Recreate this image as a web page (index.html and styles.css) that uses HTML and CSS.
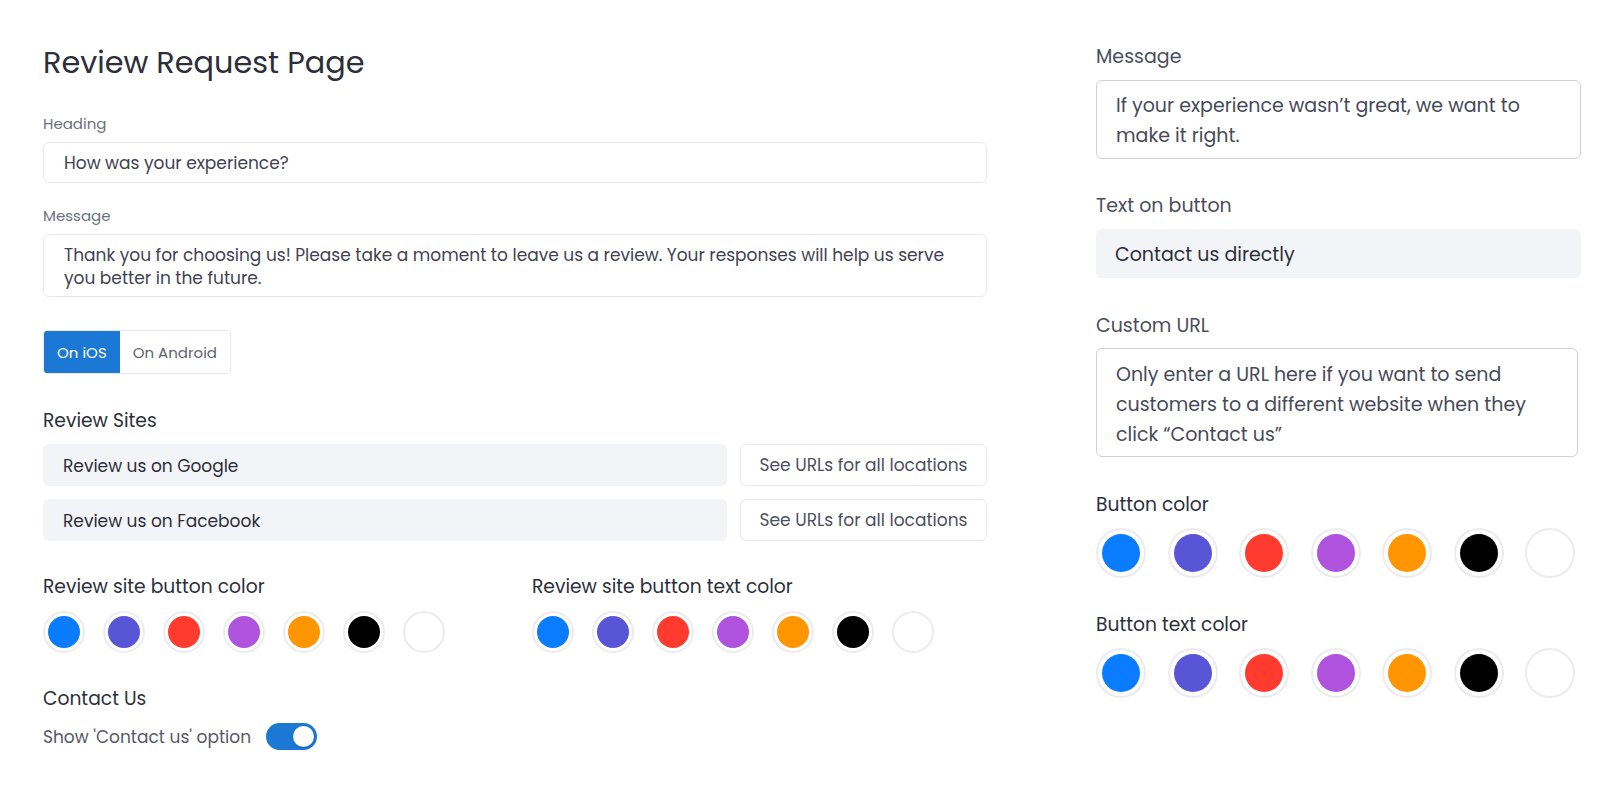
FILE: index.html
```html
<!DOCTYPE html>
<html lang="en">
<head>
    <meta charset="UTF-8">
    <meta name="viewport" content="width=device-width, initial-scale=1.0">
    <title>Review Request Page</title>
    <link rel="stylesheet" href="styles.css">
</head>
<body>
    <div class="page">
        <!-- Main settings -->
        <section class="col-main">
            <h1 class="title">Review Request Page</h1>

            <div class="field">
                <label class="label-sm" for="heading">Heading</label>
                <input class="input" type="text" id="heading" value="How was your experience?">
            </div>

            <div class="field field-msg">
                <label class="label-sm" for="message">Message</label>
                <textarea class="input textarea-main" id="message">Thank you for choosing us! Please take a moment to leave us a review. Your responses will help us serve
you better in the future.</textarea>
            </div>

            <!-- Platform switch -->
            <div class="segmented">
                <button class="seg-btn active" type="button">On iOS</button>
                <button class="seg-btn" type="button">On Android</button>
            </div>

            <h2 class="section-label sites-label">Review Sites</h2>
            <div class="site-row">
                <input class="site-input" type="text" value="Review us on Google">
                <button class="urls-btn" type="button">See URLs for all locations</button>
            </div>
            <div class="site-row site-row-2">
                <input class="site-input" type="text" value="Review us on Facebook">
                <button class="urls-btn" type="button">See URLs for all locations</button>
            </div>

            <div class="color-groups">
                <div>
                    <h3 class="section-label">Review site button color</h3>
                    <div class="swatches">
                        <button class="swatch blue"></button>
                        <button class="swatch indigo"></button>
                        <button class="swatch red"></button>
                        <button class="swatch purple"></button>
                        <button class="swatch orange"></button>
                        <button class="swatch black"></button>
                        <button class="swatch white"></button>
                    </div>
                </div>
                <div>
                    <h3 class="section-label">Review site button text color</h3>
                    <div class="swatches">
                        <button class="swatch blue"></button>
                        <button class="swatch indigo"></button>
                        <button class="swatch red"></button>
                        <button class="swatch purple"></button>
                        <button class="swatch orange"></button>
                        <button class="swatch black"></button>
                        <button class="swatch white"></button>
                    </div>
                </div>
            </div>

            <h3 class="section-label contact-label">Contact Us</h3>
            <div class="toggle-row">
                <span>Show 'Contact us' option</span>
                <span class="switch"><span class="knob"></span></span>
            </div>
        </section>

        <!-- Contact us settings -->
        <section class="col-side">
            <label class="label-lg first" for="contact-msg">Message</label>
            <textarea class="side-input side-msg" id="contact-msg">If your experience wasn’t great, we want to
make it right.</textarea>

            <label class="label-lg" for="btn-text">Text on button</label>
            <input class="side-input side-text" type="text" id="btn-text" value="Contact us directly">

            <label class="label-lg label-url" for="custom-url">Custom URL</label>
            <textarea class="side-input side-url" id="custom-url">Only enter a URL here if you want to send
customers to a different website when they
click “Contact us”</textarea>

            <h3 class="section-label side-color">Button color</h3>
            <div class="swatches swatches-lg">
                <button class="swatch blue"></button>
                <button class="swatch indigo"></button>
                <button class="swatch red"></button>
                <button class="swatch purple"></button>
                <button class="swatch orange"></button>
                <button class="swatch black"></button>
                <button class="swatch white"></button>
            </div>

            <h3 class="section-label side-color side-color-2">Button text color</h3>
            <div class="swatches swatches-lg swatches-last">
                <button class="swatch blue"></button>
                <button class="swatch indigo"></button>
                <button class="swatch red"></button>
                <button class="swatch purple"></button>
                <button class="swatch orange"></button>
                <button class="swatch black"></button>
                <button class="swatch white"></button>
            </div>
        </section>
    </div>
</body>
</html>
```

FILE: styles.css
```css
body {
    font-family: 'Poppins', 'Open Sans', sans-serif;
    margin: 0;
    padding: 0;
    background-color: #fff;
    color: #2c2f39;
}

.page {
    display: grid;
    grid-template-columns: 944px 485px;
    column-gap: 109px;
    padding: 0 43px;
}

/* ---------- left column ---------- */

.title {
    margin: 45px 0 0;
    font-size: 30.3px;
    line-height: 36px;
    font-weight: 400;
    color: #2c2f39;
}

.field {
    display: flex;
    flex-direction: column;
    margin-top: 33px;
}

.field-msg {
    margin-top: 23px;
}

.label-sm {
    font-size: 15px;
    line-height: 20px;
    color: #6d707c;
}

.input {
    margin-top: 8px;
    height: 41px;
    padding: 1px 20px 0;
    border: 1px solid #e7e8ec;
    border-radius: 6px;
    font-family: inherit;
    font-size: 17px;
    color: #3f4251;
    background: #fff;
    box-sizing: border-box;
    outline: none;
}

.textarea-main {
    height: 63px;
    padding: 9px 20px 0;
    line-height: 23px;
    resize: none;
}

.segmented {
    display: inline-flex;
    margin-top: 33px;
    border: 1px solid #e7e8ec;
    border-radius: 4px;
    overflow: hidden;
}

.seg-btn {
    height: 42px;
    padding: 0 13px;
    border: none;
    background: #fff;
    font-family: inherit;
    font-size: 15px;
    color: #5f6270;
    cursor: pointer;
}

.seg-btn.active {
    background: #1b78d4;
    color: #fff;
}

.section-label {
    margin: 0;
    font-size: 18.7px;
    line-height: 26px;
    font-weight: 400;
    color: #2c2f39;
}

.sites-label {
    margin-top: 35px;
    line-height: 24px;
}

.site-row {
    display: grid;
    grid-template-columns: 1fr 247px;
    gap: 13px;
    margin-top: 11px;
}

.site-row-2 {
    margin-top: 13px;
}

.site-input {
    height: 42px;
    padding: 1px 20px 0;
    border: none;
    border-radius: 6px;
    background: #f3f4f8;
    font-family: inherit;
    font-size: 17px;
    color: #2c2f39;
    box-sizing: border-box;
    outline: none;
}

.urls-btn {
    height: 42px;
    padding-top: 1px;
    border: 1px solid #e7e8ec;
    border-radius: 6px;
    background: #fff;
    font-family: inherit;
    font-size: 17px;
    color: #4c4f5e;
    cursor: pointer;
}

.color-groups {
    display: grid;
    grid-template-columns: 489px 1fr;
    margin-top: 33px;
}

.swatches {
    display: flex;
    gap: 18px;
    margin-top: 11px;
}

.swatch {
    width: 42px;
    height: 42px;
    padding: 3px;
    border: 2px solid #ececee;
    border-radius: 50%;
    background-clip: content-box;
    cursor: pointer;
}

.swatches-lg {
    gap: 21.5px;
    margin-top: 10px;
}

.swatches-lg .swatch {
    width: 50px;
    height: 50px;
    padding: 4px;
}

.blue { background-color: #0a7cff; }
.indigo { background-color: #5856d6; }
.red { background-color: #ff3b30; }
.purple { background-color: #af52de; }
.orange { background-color: #ff9500; }
.black { background-color: #000; }
.white { background-color: #fff; }

.contact-label {
    margin-top: 33px;
}

.toggle-row {
    display: flex;
    align-items: center;
    gap: 15px;
    margin-top: 11px;
    font-size: 17px;
    color: #565967;
}

.switch {
    display: flex;
    justify-content: flex-end;
    align-items: center;
    width: 51px;
    height: 27px;
    padding: 0 3px;
    border-radius: 14px;
    background: #1b78d4;
    box-sizing: border-box;
}

.knob {
    width: 21px;
    height: 21px;
    border-radius: 50%;
    background: #fff;
    box-shadow: 0 1px 2px rgba(0, 0, 0, 0.2);
}

/* ---------- right column ---------- */

.col-side {
    display: flex;
    flex-direction: column;
    align-items: flex-start;
}

.label-lg {
    margin-top: 34px;
    font-size: 19px;
    line-height: 26px;
    color: #4b4e5c;
}

.label-lg.first {
    margin-top: 44px;
}

.label-url {
    margin-top: 35px;
}

.side-input {
    width: 485px;
    margin-top: 10px;
    padding: 0 19px;
    border: 1px solid #d0d1d7;
    border-radius: 6px;
    font-family: inherit;
    font-size: 19px;
    color: #474a58;
    background: #fff;
    box-sizing: border-box;
    outline: none;
    resize: none;
}

.side-msg {
    height: 79px;
    padding-top: 10px;
    line-height: 30px;
}

.side-text {
    height: 49px;
    padding-top: 2px;
    border: none;
    background: #f3f4f8;
    color: #2c2f39;
}

.side-url {
    width: 482px;
    height: 109px;
    margin-top: 9px;
    padding-top: 11px;
    line-height: 30px;
}

.side-color {
    margin-top: 35px;
}

.side-color-2 {
    margin-top: 34px;
}
```
